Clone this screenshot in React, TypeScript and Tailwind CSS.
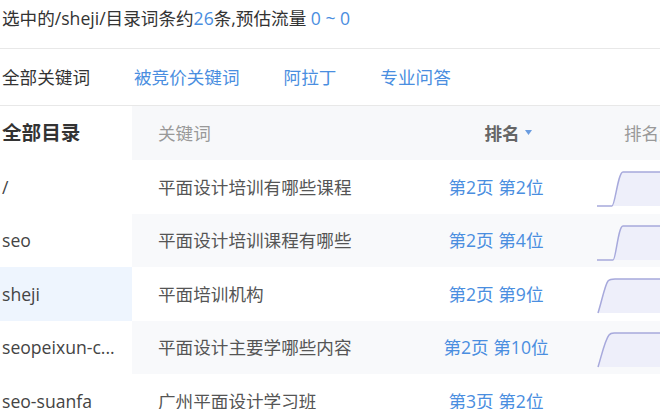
import React from "react";

interface Row {
  dir: string;
  keyword: string;
  rank: string;
  line: string;
  fill: string;
}

const rows: Row[] = [
  {
    dir: "/",
    keyword: "平面设计培训有哪些课程",
    rank: "第2页 第2位",
    line: "M0,35 L15,35 C18,35 21,1 26,1 L90,1",
    fill: "M15,35 C18,35 21,1 26,1 L90,1 L90,35 Z",
  },
  {
    dir: "seo",
    keyword: "平面设计培训课程有哪些",
    rank: "第2页 第4位",
    line: "M0,35 L16,35 C19,35 21,1 26,1 L90,1",
    fill: "M16,35 C19,35 21,1 26,1 L90,1 L90,35 Z",
  },
  {
    dir: "sheji",
    keyword: "平面培训机构",
    rank: "第2页 第9位",
    line: "M1,35 C5,22 8,7 11,3 C13,1 15,1 18,1 L90,1",
    fill: "M1,35 C5,22 8,7 11,3 C13,1 15,1 18,1 L90,1 L90,35 Z",
  },
  {
    dir: "seopeixun-c...",
    keyword: "平面设计主要学哪些内容",
    rank: "第2页 第10位",
    line: "M1,35 C5,22 8,8 12,3 C14,0 16,1 21,1 L90,1",
    fill: "M1,35 C5,22 8,8 12,3 C14,0 16,1 21,1 L90,1 L90,35 Z",
  },
  {
    dir: "seo-suanfa",
    keyword: "广州平面设计学习班",
    rank: "第3页 第2位",
    line: "M0,35 L90,35",
    fill: "",
  },
];

const font = { fontFamily: '"Open Sans", "Noto Sans CJK SC", sans-serif' };

function Trend({ line, fill }: { line: string; fill: string }) {
  return (
    <svg width="90" height="37" viewBox="0 0 90 37" className="shrink-0">
      {fill && <path d={fill} fill="#eeeffa" />}
      <path d={line} fill="none" stroke="#a7a9dc" strokeWidth="1.5" strokeLinejoin="round" />
    </svg>
  );
}

export default function App() {
  return (
    <div className="w-[660px] h-[409px] overflow-hidden bg-white text-[17.6px] text-[#333]" style={font}>
      <div className="h-[49px] border-b border-[#e8e8e8] pl-[2px] pt-[6px] leading-[24px] whitespace-nowrap">
        选中的/sheji/目录词条约<span className="text-[#4a8ee0]">26</span>条,预估流量{" "}
        <span className="text-[#4a8ee0]">0 ~ 0</span>
      </div>
      <div className="h-[57px] border-b border-[#e8e8e8] flex items-center gap-[44px] pl-[2px] whitespace-nowrap">
        <span>全部关键词</span>
        <span className="text-[#4a8ee0]">被竞价关键词</span>
        <span className="text-[#4a8ee0]">阿拉丁</span>
        <span className="text-[#4a8ee0]">专业问答</span>
      </div>
      <div className="flex">
        <div className="w-[132px] shrink-0">
          <div className="h-[54px] flex items-center pl-[2px] text-[19.6px] font-bold text-[#333]">全部目录</div>
          {rows.map((r) => (
            <div
              key={r.dir}
              className={`h-[53.5px] flex items-center pl-[2px] text-[#444] whitespace-nowrap ${
                r.dir === "sheji" ? "bg-[#eef5fe]" : ""
              }`}
            >
              {r.dir}
            </div>
          ))}
        </div>
        <div className="w-[528px] shrink-0">
          <div className="h-[54px] flex items-center bg-[#f7f8fa] whitespace-nowrap">
            <div className="w-[288px] shrink-0 pl-[26px] text-[#999]">关键词</div>
            <div className="w-[152px] shrink-0 flex items-center justify-center gap-[5px] pl-[24px] font-bold text-[#666]">
              排名
              <svg width="7" height="5" viewBox="0 0 7 5">
                <path d="M0,0 L7,0 L3.5,5 Z" fill="#6b9de0" />
              </svg>
            </div>
            <div className="shrink-0 pl-[52px] text-[#999]">排名趋势</div>
          </div>
          {rows.map((r, i) => (
            <div
              key={r.keyword}
              className={`h-[53.5px] flex whitespace-nowrap ${i % 2 === 1 ? "bg-[#f8f9fb]" : "bg-white"}`}
            >
              <div className="w-[288px] shrink-0 pl-[26px] flex items-center text-[#555]">{r.keyword}</div>
              <div className="w-[152px] shrink-0 flex items-center justify-center text-[#4a8ee0]">{r.rank}</div>
              <div className="shrink-0 pl-[25px] pt-[11px]">
                <Trend line={r.line} fill={r.fill} />
              </div>
            </div>
          ))}
        </div>
      </div>
    </div>
  );
}
